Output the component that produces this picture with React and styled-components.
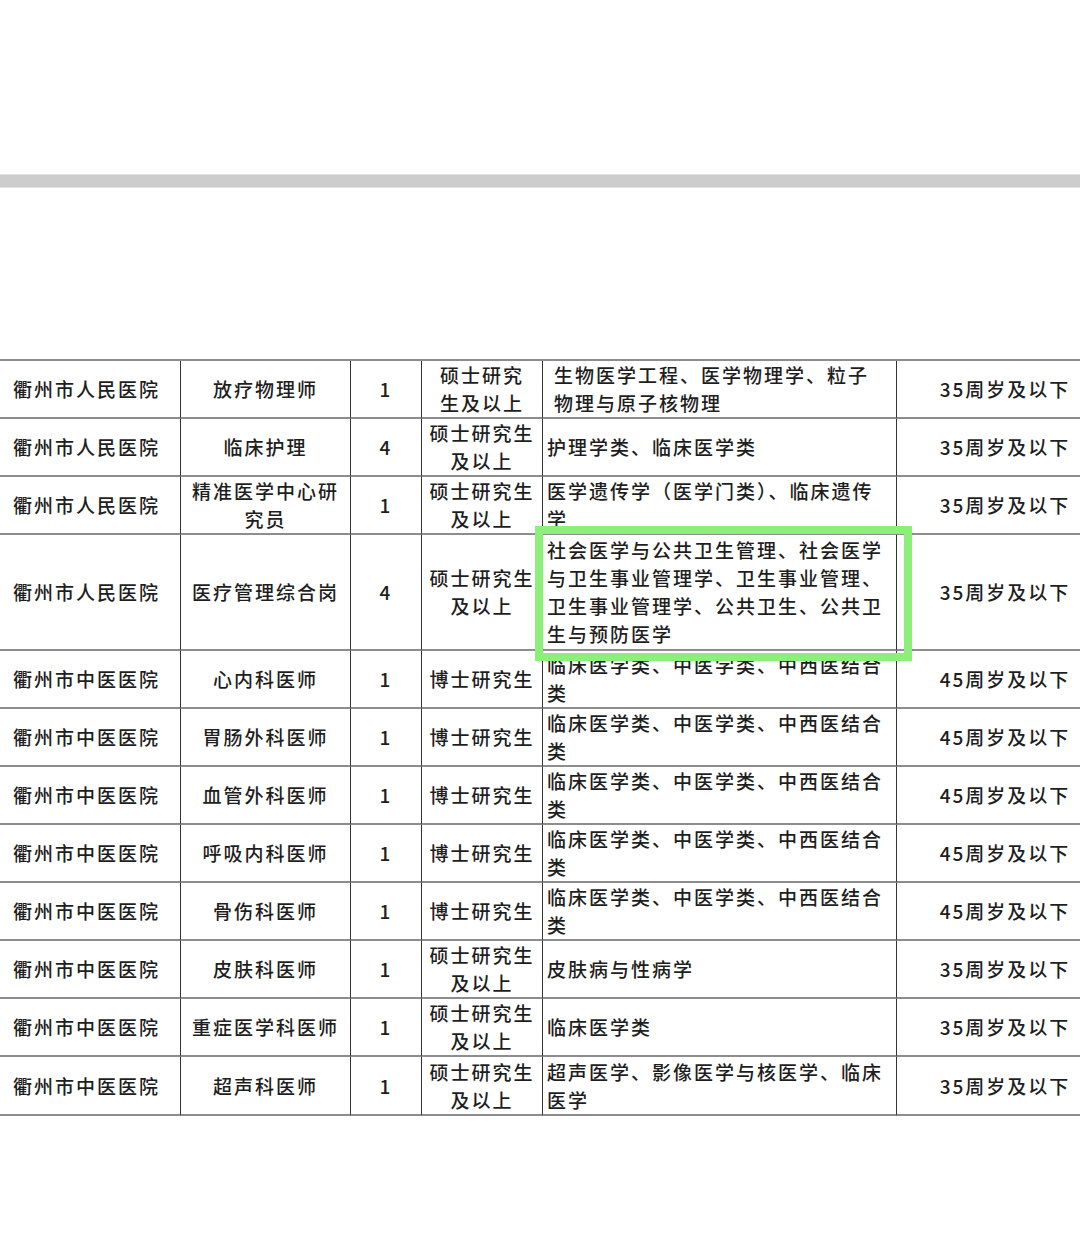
import React from "react";
import styled, { createGlobalStyle } from "styled-components";

const GlobalStyle = createGlobalStyle`
  html, body {
    margin: 0;
    padding: 0;
    background: #ffffff;
    overflow-x: hidden;
  }
  body {
    font-family: "Noto Sans CJK SC", "Noto Sans", sans-serif;
    color: #222222;
  }
`;

const Page = styled.div`
  width: 1080px;
  height: 1248px;
  overflow: hidden;
  padding-top: 174px;
  box-sizing: border-box;
`;

const Divider = styled.div`
  height: 14px;
  background: #cdcdcd;
  border-top: 1px solid #e2e2e2;
  border-bottom: 1px solid #e2e2e2;
  box-sizing: border-box;
`;

const TableWrap = styled.div`
  position: relative;
  margin-top: 171px;
  width: 1080px;
  overflow: hidden;
`;

const Table = styled.table`
  width: 1113px;
  table-layout: fixed;
  border-collapse: separate;
  border-spacing: 0;
  font-size: 19px;
  font-weight: 500;
  letter-spacing: 2px;
  color: #1e1e1e;
  border-top: 2px solid #8d8d8d;
`;

const Cell = styled.td`
  height: ${(p) => p.$h}px;
  padding: 0 ${(p) => (p.$align === "left" ? "4px" : "0")} 0
    ${(p) => (p.$align === "left" ? `${p.$indent || 4}px` : "0")};
  box-sizing: border-box;
  text-align: ${(p) => p.$align || "center"};
  vertical-align: middle;
  line-height: 28px;
  white-space: nowrap;
  border-bottom: 2px solid #8d8d8d;
  border-right: 1.5px solid #333333;
  overflow: hidden;

  &:first-child {
    padding-left: 13px;
    text-align: left;
  }
  &:last-child {
    border-right: none;
  }
`;

const Highlight = styled.div`
  position: absolute;
  left: 535px;
  top: 167px;
  width: 377px;
  height: 135px;
  border: 8px solid #8cef79;
  box-sizing: border-box;
  pointer-events: none;
`;

const cols = [181, 170, 71, 121, 354, 216];

const rows = [
  ["衢州市人民医院", ["放疗物理师"], "1", ["硕士研究", "生及以上"], ["生物医学工程、医学物理学、粒子", "物理与原子核物理"], "35周岁及以下", 58, 11],
  ["衢州市人民医院", ["临床护理"], "4", ["硕士研究生", "及以上"], ["护理学类、临床医学类"], "35周岁及以下", 58],
  ["衢州市人民医院", ["精准医学中心研", "究员"], "1", ["硕士研究生", "及以上"], ["医学遗传学（医学门类）、临床遗传", "学"], "35周岁及以下", 58],
  ["衢州市人民医院", ["医疗管理综合岗"], "4", ["硕士研究生", "及以上"], ["社会医学与公共卫生管理、社会医学", "与卫生事业管理学、卫生事业管理、", "卫生事业管理学、公共卫生、公共卫", "生与预防医学"], "35周岁及以下", 116],
  ["衢州市中医医院", ["心内科医师"], "1", ["博士研究生"], ["临床医学类、中医学类、中西医结合", "类"], "45周岁及以下", 58],
  ["衢州市中医医院", ["胃肠外科医师"], "1", ["博士研究生"], ["临床医学类、中医学类、中西医结合", "类"], "45周岁及以下", 58],
  ["衢州市中医医院", ["血管外科医师"], "1", ["博士研究生"], ["临床医学类、中医学类、中西医结合", "类"], "45周岁及以下", 58],
  ["衢州市中医医院", ["呼吸内科医师"], "1", ["博士研究生"], ["临床医学类、中医学类、中西医结合", "类"], "45周岁及以下", 58],
  ["衢州市中医医院", ["骨伤科医师"], "1", ["博士研究生"], ["临床医学类、中医学类、中西医结合", "类"], "45周岁及以下", 58],
  ["衢州市中医医院", ["皮肤科医师"], "1", ["硕士研究生", "及以上"], ["皮肤病与性病学"], "35周岁及以下", 58],
  ["衢州市中医医院", ["重症医学科医师"], "1", ["硕士研究生", "及以上"], ["临床医学类"], "35周岁及以下", 58],
  ["衢州市中医医院", ["超声科医师"], "1", ["硕士研究生", "及以上"], ["超声医学、影像医学与核医学、临床", "医学"], "35周岁及以下", 59],
];

function Lines({ items }) {
  return items.map((t, i) => (
    <React.Fragment key={i}>
      {i > 0 && <br />}
      {t}
    </React.Fragment>
  ));
}

export default function App() {
  return (
    <>
      <GlobalStyle />
      <Page>
        <Divider />
        <TableWrap>
          <Table>
            <colgroup>
              {cols.map((w, i) => (
                <col key={i} style={{ width: w }} />
              ))}
            </colgroup>
            <tbody>
              {rows.map((r, i) => {
                const [org, post, num, degree, major, age, h, indent] = r;
                return (
                  <tr key={i}>
                    <Cell $h={h}>{org}</Cell>
                    <Cell $h={h}>
                      <Lines items={post} />
                    </Cell>
                    <Cell $h={h}>{num}</Cell>
                    <Cell $h={h}>
                      <Lines items={degree} />
                    </Cell>
                    <Cell $h={h} $align="left" $indent={indent}>
                      <Lines items={major} />
                    </Cell>
                    <Cell $h={h}>{age}</Cell>
                  </tr>
                );
              })}
            </tbody>
          </Table>
          <Highlight />
        </TableWrap>
      </Page>
    </>
  );
}
